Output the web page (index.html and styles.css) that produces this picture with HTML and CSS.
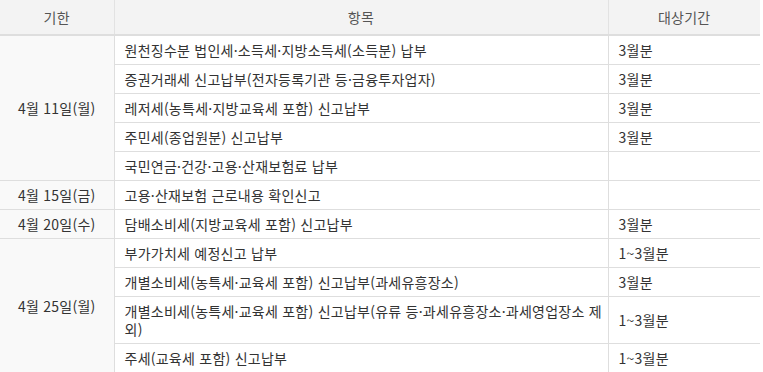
FILE: index.html
```html
<!DOCTYPE html>
<html lang="ko">
<head>
<meta charset="utf-8">
<title>세무일정</title>
<link rel="stylesheet" href="styles.css">
</head>
<body>
<table class="sched">
  <colgroup>
    <col class="c-date">
    <col class="c-item">
    <col class="c-period">
  </colgroup>
  <thead>
    <tr><th>기한</th><th>항목</th><th>대상기간</th></tr>
  </thead>
  <tbody>
    <tr><td class="date" rowspan="5">4월 11일(월)</td><td>원천징수분 법인세·소득세·지방소득세(소득분) 납부</td><td>3월분</td></tr>
    <tr><td>증권거래세 신고납부(전자등록기관 등·금융투자업자)</td><td>3월분</td></tr>
    <tr><td>레저세(농특세·지방교육세 포함) 신고납부</td><td>3월분</td></tr>
    <tr><td>주민세(종업원분) 신고납부</td><td>3월분</td></tr>
    <tr><td>국민연금·건강·고용·산재보험료 납부</td><td></td></tr>
    <tr><td class="date">4월 15일(금)</td><td>고용·산재보험 근로내용 확인신고</td><td></td></tr>
    <tr><td class="date">4월 20일(수)</td><td>담배소비세(지방교육세 포함) 신고납부</td><td>3월분</td></tr>
    <tr><td class="date" rowspan="4">4월 25일(월)</td><td>부가가치세 예정신고 납부</td><td>1~3월분</td></tr>
    <tr><td>개별소비세(농특세·교육세 포함) 신고납부(과세유흥장소)</td><td>3월분</td></tr>
    <tr><td>개별소비세(농특세·교육세 포함) 신고납부(유류 등·과세유흥장소·과세영업장소 제외)</td><td>1~3월분</td></tr>
    <tr class="last"><td>주세(교육세 포함) 신고납부</td><td>1~3월분</td></tr>
  </tbody>
</table>
</body>
</html>
```

FILE: styles.css
```css
html, body {
  margin: 0;
  padding: 0;
  background: #fff;
}
body {
  font-family: "Noto Sans CJK KR", "Noto Sans", sans-serif;
  font-size: 14px;
  letter-spacing: 0.25px;
  color: #333;
}
.sched {
  width: 760px;
  border-collapse: collapse;
  table-layout: fixed;
  border-bottom: 2px solid #8c9bb5;
}
.c-date { width: 114px; }
.c-item { width: 494px; }
.c-period { width: 152px; }
.sched th {
  height: 34px;
  padding: 0;
  background: #f3f3f3;
  color: #555;
  font-weight: normal;
  text-align: center;
  border-bottom: 2px solid #dedede;
  border-left: 1px solid #e2e2e2;
  line-height: 18px;
}
.sched th:first-child { border-left: none; }
.sched td {
  padding: 5px 2px 5px 10px;
  line-height: 18px;
  border-bottom: 1px solid #dedede;
  border-left: 1px solid #dedede;
  vertical-align: middle;
  text-align: left;
}
.sched td.date {
  border-left: none;
  background: #f9f9f9;
  text-align: center;
  padding-left: 4px;
  padding-right: 4px;
}
.sched tr.last td { border-bottom: none; }
```
